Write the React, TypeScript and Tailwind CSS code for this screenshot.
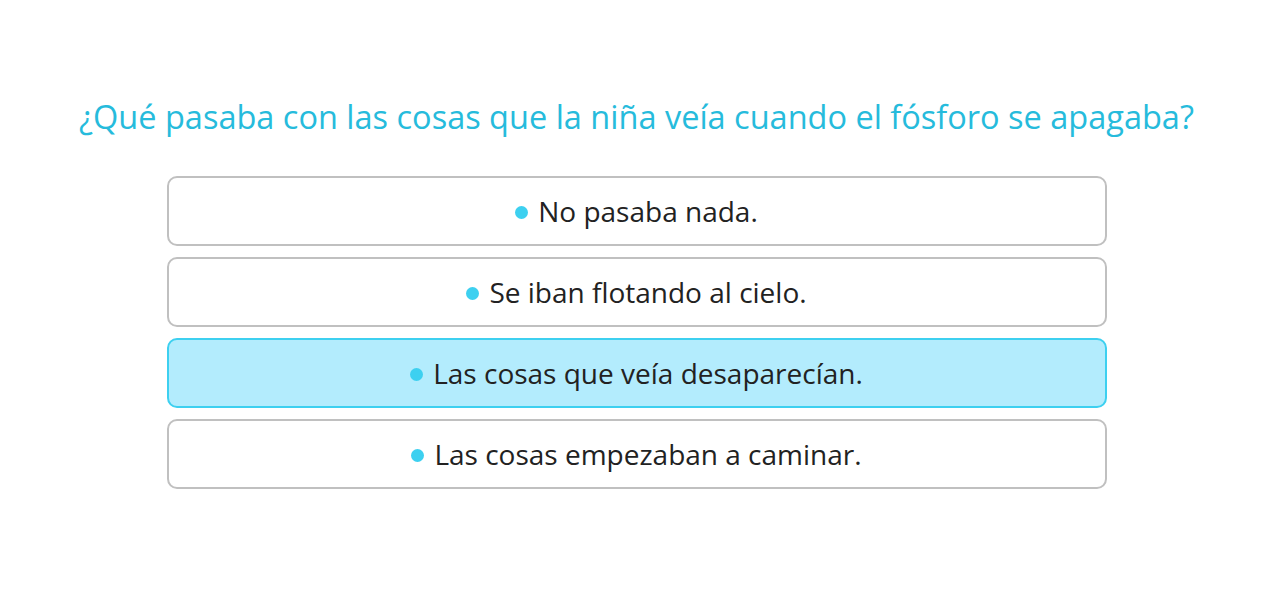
const options = [
  { id: 1, text: 'No pasaba nada.', selected: false },
  { id: 2, text: 'Se iban flotando al cielo.', selected: false },
  { id: 3, text: 'Las cosas que veía desaparecían.', selected: true },
  { id: 4, text: 'Las cosas empezaban a caminar.', selected: false },
];

export default function App() {
  return (
    <div className="min-h-screen bg-white flex flex-col items-center pt-[94px] font-['Open_Sans',sans-serif]">
      <h2 className="text-[32.5px] leading-[46px] text-[#26bbdc] text-center mb-[36px]">
        ¿Qué pasaba con las cosas que la niña veía cuando el fósforo se apagaba?
      </h2>

      <div className="w-[940px] flex flex-col gap-[11px]">
        {options.map((opt) => (
          <button
            key={opt.id}
            className={
              'h-[70px] rounded-[10px] border-2 flex items-center justify-center gap-[10px] text-[28px] text-[#222]' +
              (opt.selected ? ' bg-[#b3ecfd] border-[#3dd0f0]' : ' bg-white border-[#c0c0c0]')
            }
          >
            <span className="w-[13px] h-[13px] rounded-full bg-[#3dd0f0] mt-[2px]" />
            {opt.text}
          </button>
        ))}
      </div>
    </div>
  );
}
